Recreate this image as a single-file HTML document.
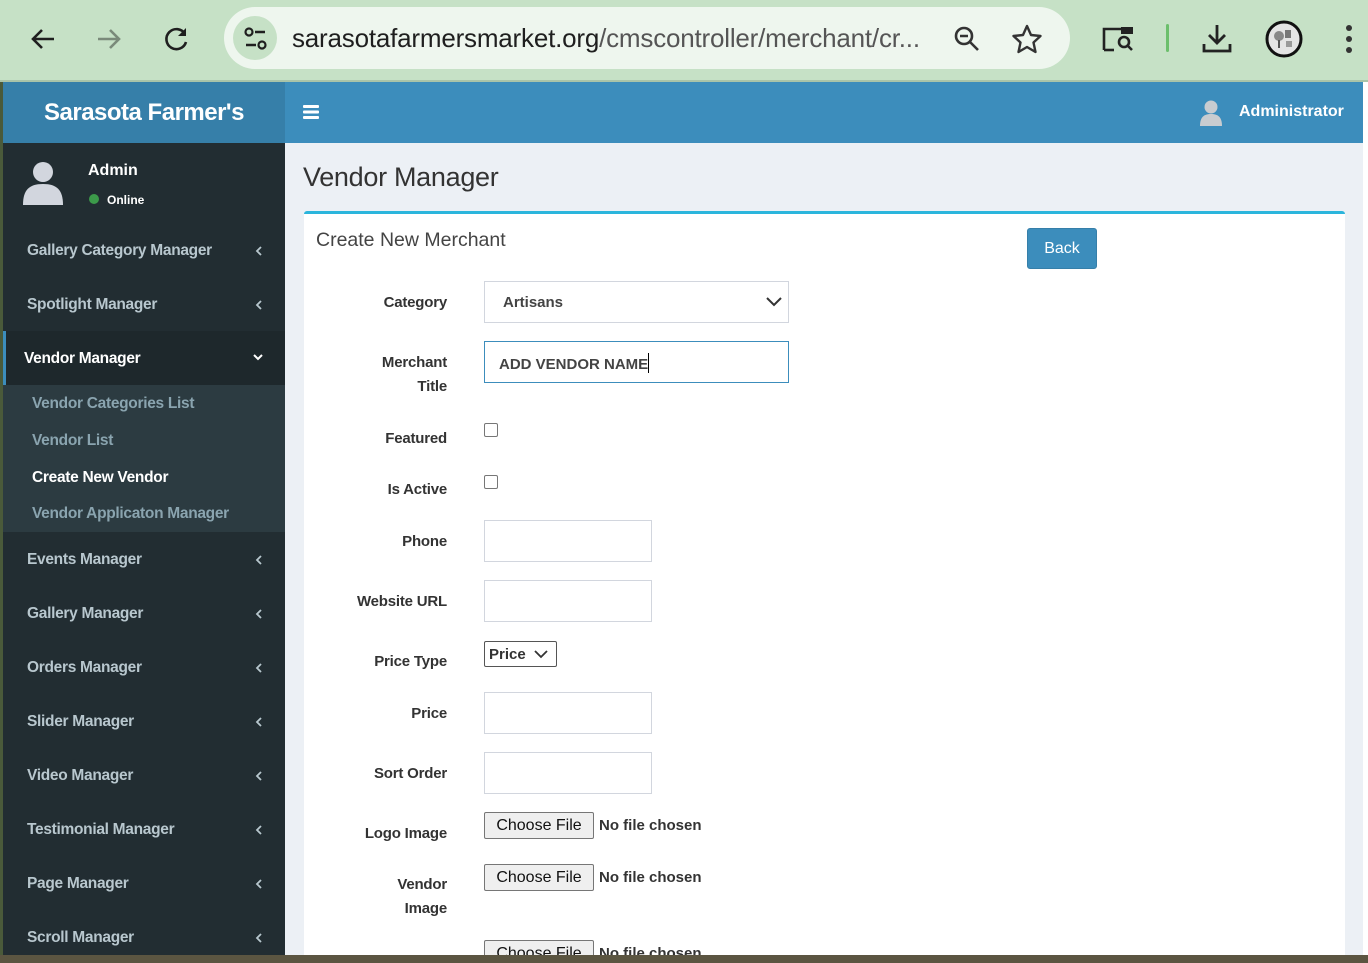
<!DOCTYPE html>
<html><head><meta charset="utf-8"><style>
*{box-sizing:border-box;margin:0;padding:0}
body{width:1368px;height:963px;overflow:hidden;background:#5a5a40;font-family:"Liberation Sans",sans-serif;position:relative}
.a{position:absolute}
.tb{left:0;top:0;width:1368px;height:82px;background:#c6e1c6;border-bottom:2px solid #a9c4a9}
.url{left:224px;top:7px;width:846px;height:62px;border-radius:31px;background:#eef6ee}
.urltxt{left:292px;top:23px;font-size:26px;color:#1f1f1f;letter-spacing:-0.2px}
.urltxt span{color:#555}
.hdr1{left:3px;top:82px;width:282px;height:61px;background:#367fa9;color:#fff;font-weight:bold;font-size:24px;text-align:center;line-height:61px;letter-spacing:-0.5px}
.hdr2{left:285px;top:82px;width:1078px;height:61px;background:#3c8dbc}
.side{left:3px;top:143px;width:282px;height:812px;background:#222d32}
.clip{left:285px;top:143px;width:1078px;height:812px;background:#ecf0f5;overflow:hidden}
.bottom{left:0;top:955px;width:1368px;height:8px;background:#5b5541}
.rstrip{left:1363px;top:82px;width:5px;height:873px;background:#fff}
.mi{position:absolute;left:24px;font-size:15.5px;font-weight:bold;color:#b8c7ce;letter-spacing:-0.3px}
.ch{position:absolute;left:252px}
.sub{position:absolute;left:29px;font-size:15.5px;font-weight:bold;color:#8aa4af;letter-spacing:-0.3px}
.lbl{position:absolute;right:921px;font-size:15px;font-weight:bold;color:#333;text-align:right;line-height:24px;letter-spacing:-0.2px}
.inp{position:absolute;left:199px;width:168px;height:42px;border:1px solid #d2d6de;background:#fff}
.cb{position:absolute;left:199px;width:14px;height:14px;border:1px solid #777;border-radius:2px;background:#fff}
.fb{position:absolute;left:199px;width:110px;height:27px;border:1px solid #767676;border-radius:2px;background:#efefef;font-size:16px;color:#111;text-align:center;line-height:25px}
.fn{position:absolute;left:314px;font-size:15px;font-weight:bold;color:#333}
.clip .lbl{right:auto;width:162px;left:0}
</style></head><body>
<div class="a tb"></div>
<svg class="a" style="left:28px;top:24px" width="30" height="30" viewBox="0 0 30 30"><path d="M26 15H5M14 6l-9 9 9 9" stroke="#1f1f1f" stroke-width="2.6" fill="none"/></svg>
<svg class="a" style="left:94px;top:24px" width="30" height="30" viewBox="0 0 30 30"><path d="M4 15h21M16 6l9 9-9 9" stroke="#7a8a7a" stroke-width="2.6" fill="none"/></svg>
<svg class="a" style="left:162px;top:24px" width="30" height="30" viewBox="0 0 30 30"><path d="M23 10A10 10 0 1 0 24 18" stroke="#1f1f1f" stroke-width="2.6" fill="none"/><path d="M24 4v8h-8z" fill="#1f1f1f"/></svg>
<div class="a url"></div>
<div class="a" style="left:233px;top:16px;width:44px;height:44px;border-radius:22px;background:#c6e1c6"></div>
<svg class="a" style="left:243px;top:26px" width="26" height="26" viewBox="0 0 26 26"><circle cx="6" cy="6" r="3.5" stroke="#1f1f1f" stroke-width="2.2" fill="none"/><path d="M12 6h10M3 19h10" stroke="#1f1f1f" stroke-width="2.4"/><circle cx="19" cy="19" r="3.5" stroke="#1f1f1f" stroke-width="2.2" fill="none"/></svg>
<div class="a urltxt">sarasotafarmersmarket.org<span>/cmscontroller/merchant/cr...</span></div>
<svg class="a" style="left:952px;top:24px" width="30" height="30" viewBox="0 0 30 30"><circle cx="12" cy="12" r="8" stroke="#333" stroke-width="2.6" fill="none"/><path d="M8 12h8M18 18l8 8" stroke="#333" stroke-width="2.6"/></svg>
<svg class="a" style="left:1011px;top:23px" width="32" height="32" viewBox="0 0 32 32"><path d="M16 3l4 9 9.5 1-7 6.5 2 9.5L16 24l-8.5 5 2-9.5-7-6.5 9.5-1z" stroke="#333" stroke-width="2.4" fill="none" stroke-linejoin="round"/></svg>
<svg class="a" style="left:1101px;top:24px" width="36" height="30" viewBox="0 0 36 30"><path d="M3 26V5h28" stroke="#222" stroke-width="2.6" fill="none"/><path d="M3 26h10" stroke="#222" stroke-width="2.6"/><rect x="20" y="3" width="12" height="7" fill="#222"/><circle cx="23" cy="18" r="5" stroke="#222" stroke-width="2.6" fill="none"/><path d="M27 22l4 4" stroke="#222" stroke-width="2.6"/></svg>
<div class="a" style="left:1166px;top:24px;width:3px;height:28px;background:#6cbf6c;border-radius:2px"></div>
<svg class="a" style="left:1201px;top:22px" width="32" height="32" viewBox="0 0 32 32"><path d="M16 3v18M8 13l8 8 8-8M3 22v7h26v-7" stroke="#222" stroke-width="2.8" fill="none"/></svg>
<svg class="a" style="left:1265px;top:20px" width="38" height="38" viewBox="0 0 38 38"><circle cx="19" cy="19" r="17" fill="#e4e4e4" stroke="#111" stroke-width="3"/><circle cx="14" cy="16" r="5" fill="#888"/><rect x="20" y="10" width="6" height="8" fill="#777"/><rect x="13" y="20" width="2" height="8" fill="#555"/><rect x="21" y="21" width="6" height="6" fill="#999"/></svg>
<svg class="a" style="left:1342px;top:24px" width="14" height="30" viewBox="0 0 14 30"><circle cx="7" cy="4" r="3" fill="#333"/><circle cx="7" cy="15" r="3" fill="#333"/><circle cx="7" cy="26" r="3" fill="#333"/></svg>

<div class="a" style="left:0;top:82px;width:3px;height:881px;background:#4a5a3a"></div>
<div class="a hdr1">Sarasota Farmer's</div>
<div class="a hdr2"></div>
<svg class="a" style="left:303px;top:104px" width="16" height="16" viewBox="0 0 16 16"><rect y="1" width="16" height="3" rx="1" fill="#fff"/><rect y="6.5" width="16" height="3" rx="1" fill="#fff"/><rect y="12" width="16" height="3" rx="1" fill="#fff"/></svg>
<svg class="a" style="left:1199px;top:99px" width="24" height="28" viewBox="0 0 24 28"><circle cx="12" cy="8" r="6.5" fill="#c8ccd0"/><path d="M1 27c0-9 4-12 11-12s11 3 11 12z" fill="#c8ccd0"/></svg>
<div class="a" style="left:1239px;top:103px;color:#fff;font-weight:bold;font-size:16px">Administrator</div>
<div class="a rstrip"></div>

<div class="a side">
 <svg class="a" style="left:19px;top:17px" width="42" height="46" viewBox="0 0 42 46"><circle cx="21" cy="12" r="10" fill="#d2d6de"/><path d="M1 45c0-15 6-21 20-21s20 6 20 21z" fill="#d2d6de"/></svg>
 <div class="a" style="left:85px;top:19px;color:#fff;font-weight:bold;font-size:16px">Admin</div>
 <div class="a" style="left:86px;top:51px;width:10px;height:10px;border-radius:5px;background:#3c9a4a"></div>
 <div class="a" style="left:104px;top:50px;color:#fff;font-weight:bold;font-size:12px">Online</div>
 <div class="mi" style="top:99px">Gallery Category Manager</div><svg class="ch" style="top:102px" width="8" height="12" viewBox="0 0 8 12"><path d="M6 2L2 6l4 4" stroke="#b8c7ce" stroke-width="1.8" fill="none"/></svg>
 <div class="mi" style="top:153px">Spotlight Manager</div><svg class="ch" style="top:156px" width="8" height="12" viewBox="0 0 8 12"><path d="M6 2L2 6l4 4" stroke="#b8c7ce" stroke-width="1.8" fill="none"/></svg>
 <div class="a" style="left:0;top:188px;width:282px;height:54px;background:#1e282c;border-left:3px solid #3c8dbc"></div>
 <div class="mi" style="top:207px;color:#fff;left:21px">Vendor Manager</div>
 <svg class="a" style="left:249px;top:209px" width="12" height="10" viewBox="0 0 12 10"><path d="M2 3l4 4 4-4" stroke="#fff" stroke-width="2" fill="none"/></svg>
 <div class="a" style="left:0;top:242px;width:282px;height:147px;background:#2c3b41"></div>
 <div class="sub" style="top:252px">Vendor Categories List</div>
 <div class="sub" style="top:289px">Vendor List</div>
 <div class="sub" style="top:326px;color:#fff">Create New Vendor</div>
 <div class="sub" style="top:362px">Vendor Applicaton Manager</div>
 <div class="mi" style="top:408px">Events Manager</div><svg class="ch" style="top:411px" width="8" height="12" viewBox="0 0 8 12"><path d="M6 2L2 6l4 4" stroke="#b8c7ce" stroke-width="1.8" fill="none"/></svg>
 <div class="mi" style="top:462px">Gallery Manager</div><svg class="ch" style="top:465px" width="8" height="12" viewBox="0 0 8 12"><path d="M6 2L2 6l4 4" stroke="#b8c7ce" stroke-width="1.8" fill="none"/></svg>
 <div class="mi" style="top:516px">Orders Manager</div><svg class="ch" style="top:519px" width="8" height="12" viewBox="0 0 8 12"><path d="M6 2L2 6l4 4" stroke="#b8c7ce" stroke-width="1.8" fill="none"/></svg>
 <div class="mi" style="top:570px">Slider Manager</div><svg class="ch" style="top:573px" width="8" height="12" viewBox="0 0 8 12"><path d="M6 2L2 6l4 4" stroke="#b8c7ce" stroke-width="1.8" fill="none"/></svg>
 <div class="mi" style="top:624px">Video Manager</div><svg class="ch" style="top:627px" width="8" height="12" viewBox="0 0 8 12"><path d="M6 2L2 6l4 4" stroke="#b8c7ce" stroke-width="1.8" fill="none"/></svg>
 <div class="mi" style="top:678px">Testimonial Manager</div><svg class="ch" style="top:681px" width="8" height="12" viewBox="0 0 8 12"><path d="M6 2L2 6l4 4" stroke="#b8c7ce" stroke-width="1.8" fill="none"/></svg>
 <div class="mi" style="top:732px">Page Manager</div><svg class="ch" style="top:735px" width="8" height="12" viewBox="0 0 8 12"><path d="M6 2L2 6l4 4" stroke="#b8c7ce" stroke-width="1.8" fill="none"/></svg>
 <div class="mi" style="top:786px">Scroll Manager</div><svg class="ch" style="top:789px" width="8" height="12" viewBox="0 0 8 12"><path d="M6 2L2 6l4 4" stroke="#b8c7ce" stroke-width="1.8" fill="none"/></svg>
</div>

<div class="a clip">
<div class="a" style="left:18px;top:19px;font-size:27px;color:#333;letter-spacing:-0.3px">Vendor Manager</div>
<div class="a" style="left:19px;top:68px;width:1041px;height:760px;background:#fff;border-top:3px solid #2bb5dc;border-radius:3px 3px 0 0"></div>
<div class="a" style="left:31px;top:86px;font-size:19.5px;color:#444">Create New Merchant</div>
<div class="a" style="left:742px;top:85px;width:70px;height:41px;background:#3c8dbc;border:1px solid #367fa9;border-radius:3px;color:#fff;font-size:16px;text-align:center;line-height:39px">Back</div>

<div class="lbl" style="top:148px">Category</div>
<div class="a" style="left:199px;top:138px;width:305px;height:42px;border:1px solid #d2d6de;font-size:15px;font-weight:bold;color:#444;padding:12px 0 0 18px">Artisans</div>
<svg class="a" style="left:480px;top:153px" width="18" height="12" viewBox="0 0 18 12"><path d="M2 2l7 7 7-7" stroke="#333" stroke-width="2" fill="none"/></svg>
<div class="lbl" style="top:208px">Merchant<br>Title</div>
<div class="a" style="left:199px;top:198px;width:305px;height:42px;border:1px solid #3c8dbc;font-size:15px;font-weight:bold;color:#444;padding:11px 0 0 14px">ADD VENDOR NAME<span style="display:inline-block;width:1px;height:20px;background:#000;vertical-align:-4px"></span></div>
<div class="lbl" style="top:284px">Featured</div>
<div class="cb" style="top:280px"></div>
<div class="lbl" style="top:335px">Is Active</div>
<div class="cb" style="top:332px"></div>
<div class="lbl" style="top:387px">Phone</div>
<div class="inp" style="top:377px"></div>
<div class="lbl" style="top:447px">Website URL</div>
<div class="inp" style="top:437px"></div>
<div class="lbl" style="top:507px">Price Type</div>
<div class="a" style="left:199px;top:498px;width:73px;height:26px;border:1px solid #555;border-radius:2px;font-size:15px;font-weight:bold;color:#333;padding:4px 0 0 4px">Price</div>
<svg class="a" style="left:248px;top:505px" width="16" height="12" viewBox="0 0 16 12"><path d="M2 3l6 6 6-6" stroke="#333" stroke-width="1.8" fill="none"/></svg>
<div class="lbl" style="top:559px">Price</div>
<div class="inp" style="top:549px"></div>
<div class="lbl" style="top:619px">Sort Order</div>
<div class="inp" style="top:609px"></div>
<div class="lbl" style="top:679px">Logo Image</div>
<div class="fb" style="top:669px">Choose File</div><div class="fn" style="top:674px">No file chosen</div>
<div class="lbl" style="top:730px">Vendor<br>Image</div>
<div class="fb" style="top:721px">Choose File</div><div class="fn" style="top:726px">No file chosen</div>
<div class="fb" style="top:797px">Choose File</div><div class="fn" style="top:802px">No file chosen</div>
</div>
<div class="a bottom"></div>
</body></html>
